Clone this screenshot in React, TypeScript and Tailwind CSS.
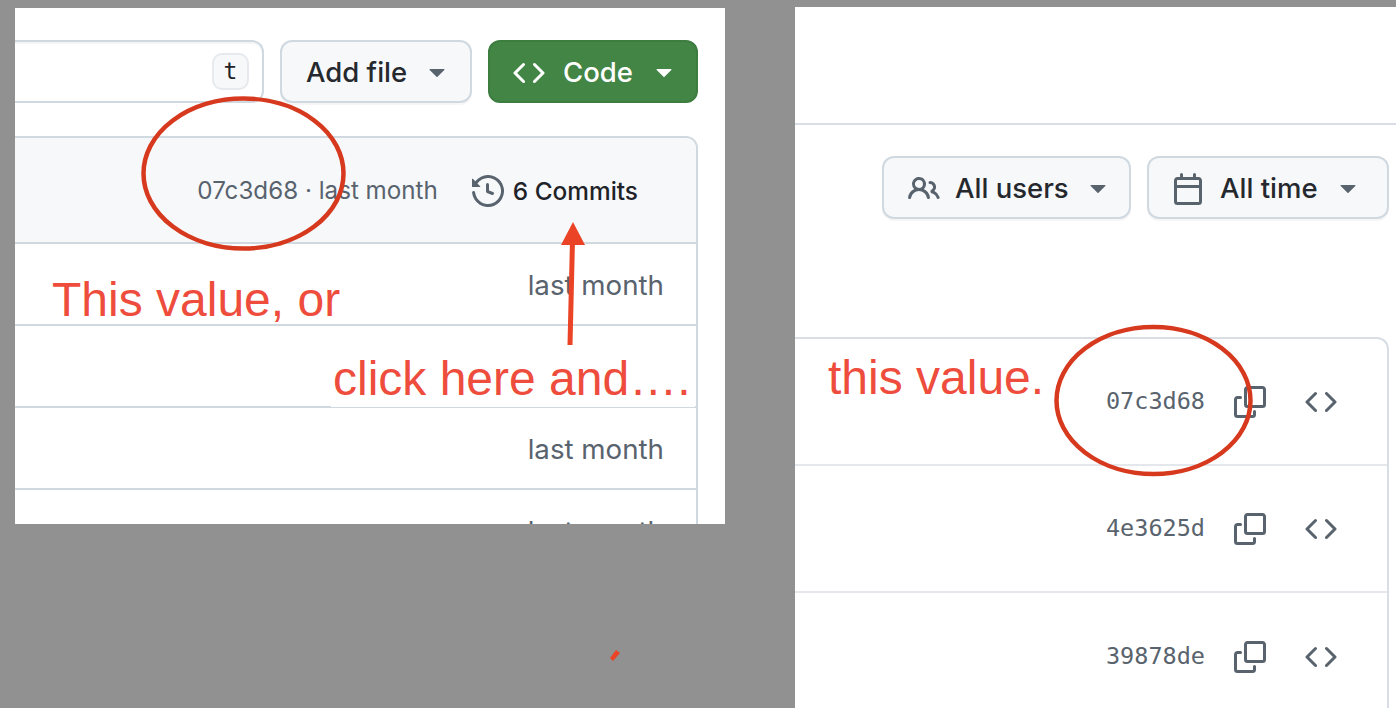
import React from 'react';

const CODE_PATH =
	'm11.28 3.22 4.25 4.25a.75.75 0 0 1 0 1.06l-4.25 4.25a.749.749 0 0 1-1.275-.326.749.749 0 0 1 .215-.734L13.94 8l-3.72-3.72a.749.749 0 0 1 .326-1.275.749.749 0 0 1 .734.215Zm-6.56 0a.751.751 0 0 1 1.042.018.751.751 0 0 1 .018 1.042L2.06 8l3.72 3.72a.749.749 0 0 1-.326 1.275.749.749 0 0 1-.734-.215L.47 8.53a.75.75 0 0 1 0-1.06Z';
const COPY_PATH =
	'M0 6.75C0 5.784.784 5 1.75 5h1.5a.75.75 0 0 1 0 1.5h-1.5a.25.25 0 0 0-.25.25v7.5c0 .138.112.25.25.25h7.5a.25.25 0 0 0 .25-.25v-1.5a.75.75 0 0 1 1.5 0v1.5A1.75 1.75 0 0 1 9.25 16h-7.5A1.75 1.75 0 0 1 0 14.25ZM5 1.75C5 .784 5.784 0 6.75 0h7.5C15.216 0 16 .784 16 1.75v7.5A1.75 1.75 0 0 1 14.25 11h-7.5A1.75 1.75 0 0 1 5 9.25Zm1.75-.25a.25.25 0 0 0-.25.25v7.5c0 .138.112.25.25.25h7.5a.25.25 0 0 0 .25-.25v-7.5a.25.25 0 0 0-.25-.25Z';
const HISTORY_PATH =
	'm.427 1.927 1.215 1.215a8.002 8.002 0 1 1-1.6 5.685.75.75 0 1 1 1.493-.154 6.5 6.5 0 1 0 1.18-4.458l1.358 1.358A.25.25 0 0 1 3.896 6H.25A.25.25 0 0 1 0 5.75V2.104a.25.25 0 0 1 .427-.177ZM7.75 4a.75.75 0 0 1 .75.75v2.992l2.028.812a.75.75 0 0 1-.557 1.392l-2.5-1A.751.751 0 0 1 7 8.25v-3.5A.75.75 0 0 1 7.75 4Z';
const PEOPLE_PATH =
	'M2 5.5a3.5 3.5 0 1 1 5.898 2.549 5.508 5.508 0 0 1 3.034 4.084.75.75 0 1 1-1.482.235 4 4 0 0 0-7.9 0 .75.75 0 0 1-1.482-.236A5.507 5.507 0 0 1 3.102 8.05 3.493 3.493 0 0 1 2 5.5ZM11 4a3.001 3.001 0 0 1 2.22 5.018 5.01 5.01 0 0 1 2.56 3.012.749.749 0 0 1-.885.954.752.752 0 0 1-.549-.514 3.507 3.507 0 0 0-2.522-2.372.75.75 0 0 1-.574-.73v-.352a.75.75 0 0 1 .416-.672A1.5 1.5 0 0 0 11 5.5.75.75 0 0 1 11 4Zm-5.5-.5a2 2 0 1 0-.001 3.999A2 2 0 0 0 5.5 3.5Z';
const CALENDAR_PATH =
	'M4.75 0a.75.75 0 0 1 .75.75V2h5V.75a.75.75 0 0 1 1.5 0V2h1.25c.966 0 1.75.784 1.75 1.75v10.5A1.75 1.75 0 0 1 13.25 16H2.75A1.75 1.75 0 0 1 1 14.25V3.75C1 2.784 1.784 2 2.75 2H4V.75A.75.75 0 0 1 4.75 0ZM2.5 7.5v6.75c0 .138.112.25.25.25h10.5a.25.25 0 0 0 .25-.25V7.5Zm10.75-4H2.75a.25.25 0 0 0-.25.25V6h11V3.75a.25.25 0 0 0-.25-.25Z';

const Octicon = ({ d, className }: { d: string; className: string }) => (
	<svg viewBox="0 0 16 16" className={`shrink-0 w-[32px] h-[32px] ${className}`} fill="currentColor">
		<path d={d} />
	</svg>
);

const Caret = ({ className }: { className: string }) => (
	<svg viewBox="0 0 16 10" className={`shrink-0 w-[16px] h-[10px] ${className}`} fill="currentColor">
		<path d="M1.2 1h13.6c.6 0 .9.7.5 1.1L8.5 8.7a.7.7 0 0 1-1 0L.7 2.1C.3 1.7.6 1 1.2 1Z" />
	</svg>
);

const PlainButton = ({ children, className }: { children: React.ReactNode; className: string }) => (
	<div
		className={`flex items-center pt-[3px] rounded-[12px] border-2 border-[#d1d9e0] bg-[#f6f8fa] shadow-[0_2px_0_rgba(31,35,40,0.04)] text-[27.5px] font-medium text-[#25292e] ${className}`}
	>
		{children}
	</div>
);

const fileRows = ['r1', 'r2', 'r3', 'r4'];
const commits = ['07c3d68', '4e3625d', '39878de'];

const RepoPanel = () => (
	<div className="absolute left-[15px] top-[8px] w-[710px] h-[516px] bg-white overflow-hidden pt-[32px] pr-[27px]">
		<div className="flex h-[64px]">
			<div className="w-[249px] h-[63px] rounded-r-[12px] border-2 border-l-0 border-[#d1d9e0] shadow-[inset_0_2px_0_rgba(209,217,224,0.25)] flex items-center justify-end pr-[13px]">
				<div className="w-[37px] h-[37px] rounded-[10px] border-2 border-[#e6eaef] bg-[#f6f8fa] flex items-center justify-center font-['DejaVu_Sans_Mono',monospace] text-[23px] text-[#1f2328]">
					t
				</div>
			</div>
			<PlainButton className="ml-[16px] w-[192px] h-[63px] pl-[24px]">
				<span>Add file</span>
				<Caret className="ml-[22px] text-[#59636e]" />
			</PlainButton>
			<div className="ml-[16px] w-[210px] h-[63px] pt-[3px] rounded-[12px] bg-[#438545] border-2 border-[#3d7d40] flex items-center pl-[23px] text-white text-[27.5px] font-medium">
				<Octicon d={CODE_PATH} className="" />
				<span className="ml-[18px]">Code</span>
				<Caret className="ml-[23px]" />
			</div>
		</div>
		<div className="mt-[32px] rounded-tr-[12px] border-2 border-l-0 border-[#d1d9e0]">
			<div className="h-[104px] pt-[2px] bg-[#f6f8fa] rounded-tr-[10px] flex items-center justify-end pr-[58px] text-[24.2px]">
				<span className="text-[#59636e]">07c3d68 · last month</span>
				<Octicon d={HISTORY_PATH} className="ml-[34px] text-[#59636e]" />
				<span className="ml-[9px] text-[24.4px] font-medium text-[#1f2328]">6 Commits</span>
			</div>
			{fileRows.map((row) => (
				<div
					key={row}
					className="h-[82px] pt-[3px] border-t-2 border-[#d1d9e0] flex items-center justify-end pr-[32px] text-[27.7px] text-[#59636e]"
				>
					last month
				</div>
			))}
		</div>
	</div>
);

const CommitPanel = () => (
	<div className="absolute left-[795px] top-[7px] w-[601px] h-[701px] bg-white overflow-hidden">
		<div className="h-[118px] border-b-2 border-[#d8dee4]" />
		<div className="mt-[31px] flex justify-end gap-[16px] pr-[7px]">
			<PlainButton className="w-[249px] h-[63px] pl-[24px]">
				<Octicon d={PEOPLE_PATH} className="text-[#59636e]" />
				<span className="ml-[15px]">All users</span>
				<Caret className="ml-[21px] text-[#59636e]" />
			</PlainButton>
			<PlainButton className="w-[242px] h-[63px] pl-[23px]">
				<Octicon d={CALENDAR_PATH} className="text-[#59636e]" />
				<span className="ml-[16px]">All time</span>
				<Caret className="ml-[22px] text-[#59636e]" />
			</PlainButton>
		</div>
		<div className="mt-[118px] mr-[7px] rounded-tr-[12px] border-t-2 border-r-2 border-[#d8dee4]">
			{commits.map((sha, i) => (
				<div
					key={sha}
					className={`h-[127px] flex items-center justify-end pr-[50px] text-[#59636e] ${i < 2 ? 'border-b-2 border-[#e4e8ec]' : ''}`}
				>
					<span className="font-['DejaVu_Sans_Mono',monospace] text-[23.5px]">{sha}</span>
					<Octicon d={COPY_PATH} className="ml-[29px]" />
					<Octicon d={CODE_PATH} className="ml-[39px]" />
				</div>
			))}
		</div>
	</div>
);

// markup drawn on top of the two screenshots
const Markup = () => (
	<>
		<svg className="absolute inset-0 w-[1396px] h-[708px]" viewBox="0 0 1396 708" fill="none">
			<ellipse cx="243.5" cy="173.5" rx="100" ry="75" stroke="#d6391d" strokeWidth="4.5" />
			<ellipse cx="1153.5" cy="400.5" rx="97" ry="73.5" stroke="#d6391d" strokeWidth="4.5" />
			<path d="M570 345 L572.5 240" stroke="#ea4326" strokeWidth="5" />
			<path d="M573 222 L585 245 L561 245 Z" fill="#ea4326" />
			<path d="M616 650 L620 653 L613 661 L610 658 Z" fill="#ea4326" />
		</svg>
		<div className="absolute left-[52px] top-[272px] font-['Liberation_Sans',sans-serif] text-[48px] leading-[56px] text-[#ee4c3c]">
			This value, or
		</div>
		<div className="absolute left-[331px] top-[351px] w-[364px] h-[56px] pl-[2px] bg-white font-['Liberation_Sans',sans-serif] text-[48px] leading-[56px] text-[#ee4c3c]">
			click here and….
		</div>
		<div className="absolute left-[828px] top-[350px] font-['Liberation_Sans',sans-serif] text-[48px] leading-[56px] text-[#ee4c3c]">
			this value.
		</div>
	</>
);

const App = () => {
	return (
		<div className="relative w-[1396px] h-[708px] bg-[#919191] overflow-hidden font-['Inter',sans-serif]">
			<RepoPanel />
			<CommitPanel />
			<Markup />
		</div>
	);
};

export default App;
